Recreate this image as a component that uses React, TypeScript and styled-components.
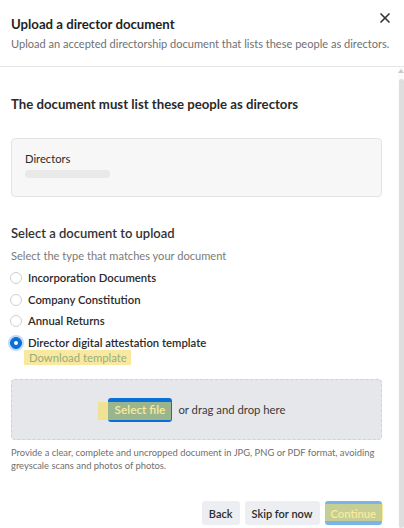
import { createGlobalStyle, styled } from "styled-components";
import { X } from "lucide-react";

const GlobalStyle = createGlobalStyle`
  html, body {
    margin: 0;
    padding: 0;
    background: #ffffff;
  }
  * {
    box-sizing: border-box;
  }
`;

const options = [
  "Incorporation Documents",
  "Company Constitution",
  "Annual Returns",
  "Director digital attestation template",
];

const selected = 3;

const App = () => {
  return (
    <>
      <GlobalStyle />
      <S.Dialog>
        <S.Header>
          <S.HeaderText>
            <S.Title>Upload a director document</S.Title>
            <S.Subtitle>
              Upload an accepted directorship document that lists these people
              as directors.
            </S.Subtitle>
          </S.HeaderText>
          <S.Close>
            <X size={16} strokeWidth={2.5} />
          </S.Close>
        </S.Header>
        <S.Body>
          <S.Content>
            <S.Heading>The document must list these people as directors</S.Heading>
            <S.Card>
              <S.CardLabel>Directors</S.CardLabel>
              <S.Redacted />
            </S.Card>

            <S.SectionTitle>Select a document to upload</S.SectionTitle>
            <S.Hint>Select the type that matches your document</S.Hint>
            <S.Options>
              {options.map((label, i) => (
                <S.Option key={label}>
                  <S.Radio $checked={i === selected} />
                  <span>{label}</span>
                </S.Option>
              ))}
            </S.Options>
            <S.LinkRow>
              <S.Link>Download template</S.Link>
            </S.LinkRow>

            <S.DropZone>
              <S.Marked $left={-10} $right={1} $top={4} $bottom={2}>
                <S.PrimaryButton>Select file</S.PrimaryButton>
              </S.Marked>
              <S.DropText>or drag and drop here</S.DropText>
            </S.DropZone>
            <S.Help>
              Provide a clear, complete and uncropped document in JPG, PNG or
              PDF format, avoiding greyscale scans and photos of photos.
            </S.Help>

            <S.Footer>
              <S.SecondaryButton>Back</S.SecondaryButton>
              <S.SecondaryButton>Skip for now</S.SecondaryButton>
              <S.Marked $left={0} $right={-1} $top={3} $bottom={4}>
                <S.PrimaryButton $disabled>Continue</S.PrimaryButton>
              </S.Marked>
            </S.Footer>
          </S.Content>
          <S.Scrollbar>
            <S.ScrollArrow />
            <S.ScrollThumb />
          </S.Scrollbar>
        </S.Body>
      </S.Dialog>
    </>
  );
};

export default App;

interface markProps {
  $left: number;
  $right: number;
  $top: number;
  $bottom: number;
}

const S = {
  Dialog: styled.div`
    width: 404px;
    height: 528px;
    display: flex;
    flex-direction: column;
    overflow: hidden;
    font-family: Lato, "Open Sans", sans-serif;
    color: #242424;
  `,
  Header: styled.div`
    display: flex;
    flex-direction: row;
    justify-content: space-between;
    align-items: flex-start;
    padding: 14px 11px 12px 11px;
    border-bottom: 1px solid #e6e6e6;
  `,
  HeaderText: styled.div`
    flex: 1;
    min-width: 0;
    display: flex;
    flex-direction: column;
  `,
  Title: styled.div`
    font-size: 13.2px;
    font-weight: 700;
    line-height: 20px;
    color: #1f1f1f;
  `,
  Subtitle: styled.div`
    font-size: 11.05px;
    line-height: 20px;
    color: #707070;
    white-space: nowrap;
  `,
  Close: styled.div`
    display: flex;
    flex: none;
    margin-top: -4px;
    color: #333333;
  `,
  Body: styled.div`
    flex: 1;
    display: flex;
    flex-direction: row;
    min-height: 0;
  `,
  Content: styled.div`
    flex: 1;
    display: flex;
    flex-direction: column;
    padding: 0 16px 0 11px;
  `,
  Heading: styled.div`
    margin-top: 27px;
    font-size: 13.2px;
    font-weight: 700;
    line-height: 20px;
    color: #2a2a2a;
  `,
  Card: styled.div`
    margin-top: 24px;
    height: 59px;
    padding: 11px 13px 0;
    background: #f7f7f7;
    border: 1px solid #e4e4e4;
    border-radius: 4px;
    display: flex;
    flex-direction: column;
  `,
  CardLabel: styled.div`
    font-size: 11.2px;
    line-height: 18px;
    color: #2a2a2a;
  `,
  Redacted: styled.div`
    margin-top: 2px;
    width: 85px;
    height: 8px;
    border-radius: 4px;
    background: #e9e9e9;
  `,
  SectionTitle: styled.div`
    margin-top: 26px;
    font-size: 13px;
    font-weight: 600;
    line-height: 20px;
    color: #333333;
  `,
  Hint: styled.div`
    margin-top: 4px;
    font-size: 11.1px;
    line-height: 18px;
    color: #7a7a7a;
  `,
  Options: styled.div`
    margin-top: 4px;
    display: flex;
    flex-direction: column;
    gap: 3.5px;
  `,
  Option: styled.label`
    display: flex;
    flex-direction: row;
    align-items: center;
    gap: 6px;
    margin-left: -1px;
    font-size: 11.3px;
    font-weight: 600;
    line-height: 18px;
    color: #2b2b2b;
  `,
  Radio: styled.span<{ $checked?: boolean }>`
    width: 12px;
    height: 12px;
    flex: none;
    border-radius: 50%;
    background: ${(p) => (p.$checked ? "#0a6fd8" : "#ffffff")};
    border: 1px solid ${(p) => (p.$checked ? "#0a6fd8" : "#cfcfcf")};
    box-shadow: ${(p) =>
      p.$checked ? "0 0 0 2px rgba(10, 111, 216, 0.25)" : "none"};
    display: flex;
    align-items: center;
    justify-content: center;

    &::after {
      content: "";
      width: 4px;
      height: 4px;
      border-radius: 50%;
      background: ${(p) => (p.$checked ? "#ffffff" : "transparent")};
    }
  `,
  LinkRow: styled.div`
    margin-top: -1.5px;
    padding-left: 13px;
    display: flex;
  `,
  Link: styled.span`
    padding: 0 4px 0 5px;
    font-size: 11.3px;
    line-height: 15px;
    color: #96ae7c;
    background: #f9e8a0;
  `,
  DropZone: styled.div`
    margin-top: 14px;
    height: 61px;
    display: flex;
    flex-direction: row;
    align-items: center;
    justify-content: center;
    gap: 6px;
    background: #e6e7ea;
    border: 1px dashed #cfd1d5;
    border-radius: 4px;
  `,
  DropText: styled.span`
    font-size: 11.3px;
    color: #3a3a3a;
  `,
  Marked: styled.span<markProps>`
    position: relative;
    display: inline-flex;

    &::after {
      content: "";
      position: absolute;
      left: ${(p) => p.$left}px;
      right: ${(p) => p.$right}px;
      top: ${(p) => p.$top}px;
      bottom: ${(p) => p.$bottom}px;
      background: rgba(244, 222, 96, 0.62);
      pointer-events: none;
    }
  `,
  PrimaryButton: styled.button<{ $disabled?: boolean }>`
    height: 24px;
    padding: 0 ${(p) => (p.$disabled ? 6 : 7)}px;
    border: none;
    border-radius: 3px;
    font-family: inherit;
    font-size: ${(p) => (p.$disabled ? 11.2 : 11.8)}px;
    font-weight: 600;
    color: #ffffff;
    background: ${(p) => (p.$disabled ? "#7ab4ea" : "#0a6fd8")};
  `,
  SecondaryButton: styled.button`
    height: 24px;
    padding: 0 7px;
    border: none;
    border-radius: 3px;
    font-family: inherit;
    font-size: 11px;
    font-weight: 600;
    color: #2b2b2b;
    background: #eceef1;
  `,
  Help: styled.div`
    margin-top: 5.5px;
    font-size: 9.4px;
    line-height: 13px;
    color: #6f6f6f;
  `,
  Footer: styled.div`
    margin-top: 29.5px;
    display: flex;
    flex-direction: row;
    justify-content: flex-end;
    gap: 5px;
  `,
  Scrollbar: styled.div`
    width: 6px;
    display: flex;
    flex-direction: column;
    align-items: center;
    background: #fbfbfb;
  `,
  ScrollArrow: styled.div`
    margin-top: 2px;
    width: 0;
    height: 0;
    border-left: 3px solid transparent;
    border-right: 3px solid transparent;
    border-bottom: 4px solid #c9c9c9;
  `,
  ScrollThumb: styled.div`
    margin-top: 6px;
    flex: 1;
    width: 5px;
    border-radius: 3px;
    background: #dedede;
  `,
};
